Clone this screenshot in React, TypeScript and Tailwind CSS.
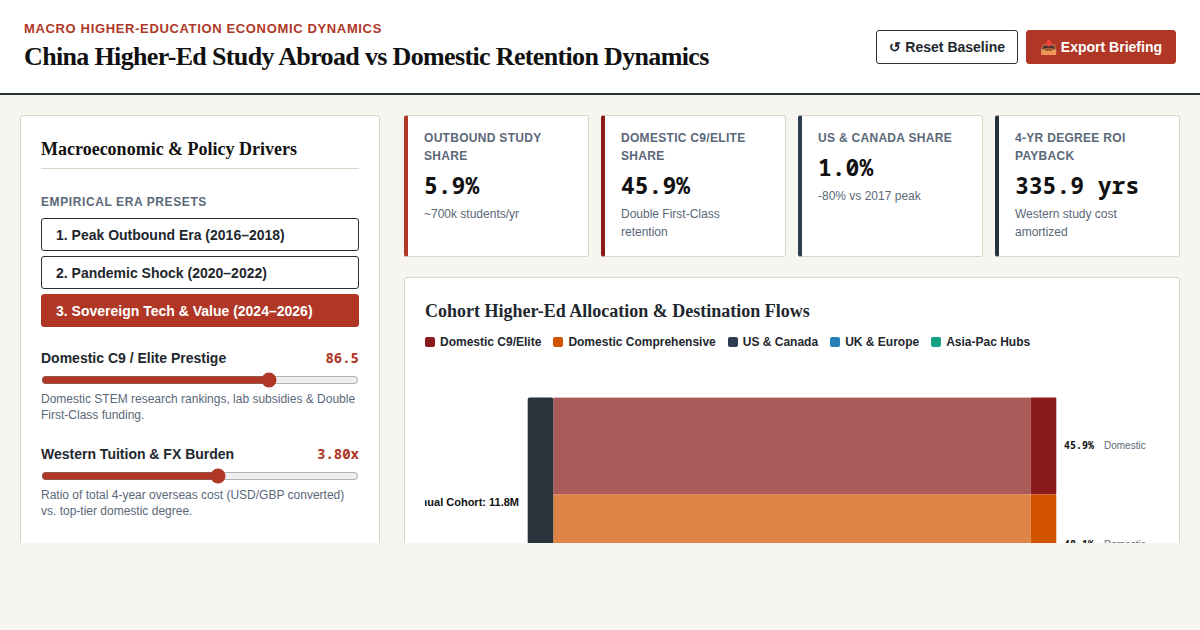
import { useState } from 'react';
import clsx from 'clsx';

const presets = [
  { id: 'peak', label: '1. Peak Outbound Era (2016–2018)' },
  { id: 'pandemic', label: '2. Pandemic Shock (2020–2022)' },
  { id: 'sovereign', label: '3. Sovereign Tech & Value (2024–2026)' },
];

const metrics = [
  { label: 'Outbound Study Share', value: '5.9%', note: '~700k students/yr', accent: 'border-l-[#b03726]' },
  { label: 'Domestic C9/Elite Share', value: '45.9%', note: 'Double First-Class retention', accent: 'border-l-[#8b1a1a]' },
  { label: 'US & Canada Share', value: '1.0%', note: '-80% vs 2017 peak', accent: 'border-l-[#2c3e50]' },
  { label: '4-Yr Degree ROI Payback', value: '335.9 yrs', note: 'Western study cost amortized', accent: 'border-l-[#263238]' },
];

const legend = [
  { label: 'Domestic C9/Elite', color: 'bg-[#8b1a1a]' },
  { label: 'Domestic Comprehensive', color: 'bg-[#d35400]' },
  { label: 'US & Canada', color: 'bg-[#2c3e50]' },
  { label: 'UK & Europe', color: 'bg-[#2980b9]' },
  { label: 'Asia-Pac Hubs', color: 'bg-[#16a085]' },
];

const flows = [
  { name: 'Domestic', share: '45.9%', y: 36.6, height: 96.8, color: '#8b1a1a' },
  { name: 'Domestic', share: '48.1%', y: 133.4, height: 101.4, color: '#d35400' },
];

interface DriverProps {
  id: string;
  label: string;
  hint: string;
  min: number;
  max: number;
  step: number;
  value: number;
  display: string;
  onChange: (value: number) => void;
}

function Driver({ id, label, hint, min, max, step, value, display, onChange }: DriverProps) {
  return (
    <div className="mb-[21px]">
      <div className="flex items-center justify-between h-5">
        <label htmlFor={id} className="text-sm font-semibold">
          {label}
        </label>
        <output htmlFor={id} className="font-['Noto_Sans_Mono','DejaVu_Sans_Mono',monospace] text-sm font-bold text-[#b03726]">
          {display}
        </output>
      </div>
      <input
        id={id}
        type="range"
        min={min}
        max={max}
        step={step}
        value={value}
        onChange={(e) => onChange(Number(e.target.value))}
        className="block w-full h-4 mt-1 mb-[3px] accent-[#b03726]"
      />
      <p className="text-xs text-[#5a6878]">{hint}</p>
    </div>
  );
}

function FlowChart() {
  return (
    <svg viewBox="0 0 734 380" className="block w-full" role="img" aria-label="Cohort destination flows">
      <rect x="102.7" y="36.6" width="25.7" height="210" rx="2" fill="#2b333a" />
      <text x="94" y="145" textAnchor="end" className="text-[11px] font-bold" fill="#111111">
        Annual Cohort: 11.8M
      </text>
      {flows.map((flow) => {
        const labelY = Math.round(flow.y + flow.height / 2 + 3);
        return (
          <g key={flow.share}>
            <rect x="128.4" y={flow.y} width="477.2" height={flow.height} fill={flow.color} opacity="0.72" />
            <rect x="605.6" y={flow.y} width="25.7" height={flow.height} rx="1" fill={flow.color} />
            <text
              x="639"
              y={labelY}
              className="font-['Noto_Sans_Mono','DejaVu_Sans_Mono',monospace] text-[10px] font-bold"
              fill="#111111"
            >
              {flow.share}
            </text>
            <text x="679" y={labelY} className="text-[10px]" fill="#5a6878">
              {flow.name}
            </text>
          </g>
        );
      })}
    </svg>
  );
}

export default function App() {
  const [preset, setPreset] = useState('sovereign');
  const [prestige, setPrestige] = useState(86.5);
  const [tuition, setTuition] = useState(3.8);

  const handleReset = () => {
    setPreset('sovereign');
    setPrestige(86.5);
    setTuition(3.8);
  };

  return (
    <div className="h-screen flex flex-col pb-[87px] bg-[#f7f5f0] text-[#1e272e] font-['Liberation_Sans',Arial,sans-serif]">
      <header className="flex items-center justify-between px-6 py-5 bg-white border-b-2 border-[#263238]">
        <div>
          <p className="text-[13px] leading-[18px] font-bold uppercase tracking-wider text-[#b03726]">
            Macro Higher-Education Economic Dynamics
          </p>
          <h1 className="mt-[3px] text-[26px] leading-8 font-bold tracking-tight text-[#111111] font-['Liberation_Serif',serif]">
            China Higher-Ed Study Abroad vs Domestic Retention Dynamics
          </h1>
        </div>
        <div className="flex gap-2">
          <button
            onClick={handleReset}
            className="h-[34px] px-3 bg-white border border-[#263238] rounded-[3px] text-sm font-semibold"
          >
            ↺ Reset Baseline
          </button>
          <button className="h-[34px] px-[13px] bg-[#b03726] border border-[#b03726] rounded-[3px] text-sm font-semibold text-white">
            📥 Export Briefing
          </button>
        </div>
      </header>

      <main className="flex-1 min-h-0 overflow-hidden grid grid-cols-[360px_1fr] gap-6 px-5 pt-5">
        <aside className="h-max p-5 bg-white border border-[#d9d5c7] rounded-[3px]">
          <h2 className="pt-0.5 pb-2 text-lg leading-[22px] font-bold text-[#111111] border-b border-[#d9d5c7] font-['Liberation_Serif',serif]">
            Macroeconomic &amp; Policy Drivers
          </h2>
          <h3 className="mt-6 mb-[7px] text-xs leading-[18px] font-bold uppercase tracking-wider text-[#5a6878]">
            Empirical Era Presets
          </h3>
          <div className="flex flex-col gap-[5px] mb-[21px]">
            {presets.map((item) => (
              <button
                key={item.id}
                onClick={() => setPreset(item.id)}
                className={clsx(
                  'h-[33px] px-3.5 border rounded-[3px] text-left text-sm font-semibold',
                  preset === item.id ? 'bg-[#b03726] border-[#b03726] text-white' : 'bg-white border-[#263238]'
                )}
              >
                {item.label}
              </button>
            ))}
          </div>
          <Driver
            id="prestige"
            label="Domestic C9 / Elite Prestige"
            hint="Domestic STEM research rankings, lab subsidies & Double First-Class funding."
            min={50}
            max={100}
            step={0.5}
            value={prestige}
            display={prestige.toFixed(1)}
            onChange={setPrestige}
          />
          <Driver
            id="tuition"
            label="Western Tuition & FX Burden"
            hint="Ratio of total 4-year overseas cost (USD/GBP converted) vs. top-tier domestic degree."
            min={1}
            max={6}
            step={0.1}
            value={tuition}
            display={`${tuition.toFixed(2)}x`}
            onChange={setTuition}
          />
        </aside>

        <div className="min-w-0 flex flex-col gap-5">
          <section className="grid grid-cols-4 gap-3">
            {metrics.map((metric) => (
              <div
                key={metric.label}
                className={clsx(
                  'px-4 pt-[13px] pb-[15px] bg-white border border-l-4 border-[#d9d5c7] rounded-[3px]',
                  metric.accent
                )}
              >
                <p className="text-xs leading-[18px] font-bold uppercase tracking-wide text-[#5a6878]">{metric.label}</p>
                <p className="my-0.5 text-[23px] leading-9 font-bold text-[#111111] font-['Noto_Sans_Mono','DejaVu_Sans_Mono',monospace]">
                  {metric.value}
                </p>
                <p className="text-xs leading-[18px] text-[#5a6878]">{metric.note}</p>
              </div>
            ))}
          </section>

          <section className="p-5 bg-white border border-[#d9d5c7] rounded-[3px]">
            <h2 className="text-lg leading-[26px] font-bold font-['Liberation_Serif',serif]">
              Cohort Higher-Ed Allocation &amp; Destination Flows
            </h2>
            <ul className="flex flex-wrap gap-3 mt-[9px] mb-2.5 text-xs leading-[18px] font-semibold">
              {legend.map((item) => (
                <li key={item.label} className="flex items-center gap-[5px]">
                  <span className={clsx('size-2.5 rounded-xs', item.color)} />
                  {item.label}
                </li>
              ))}
            </ul>
            <FlowChart />
          </section>
        </div>
      </main>
    </div>
  );
}
